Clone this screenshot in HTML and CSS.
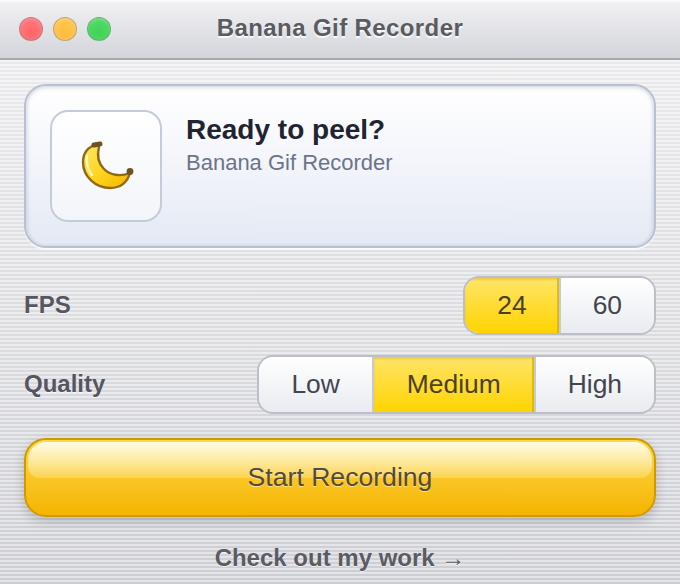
FILE: index.html
```html
<!DOCTYPE html>
<html lang="en">
<head>
<meta charset="utf-8">
<title>Banana Gif Recorder</title>
<link rel="stylesheet" href="styles.css">
</head>
<body>
<div class="window">
  <header class="titlebar">
    <div class="lights">
      <span class="light red"></span>
      <span class="light yellow"></span>
      <span class="light green"></span>
    </div>
    <h1 class="window-title">Banana Gif Recorder</h1>
  </header>
  <main class="content">
    <section class="card">
      <div class="icon-box">
        <svg class="banana" viewBox="78 140 56 52" width="56" height="52" aria-hidden="true">
          <defs>
            <linearGradient id="peel" x1="0" y1="0" x2="1" y2="1">
              <stop offset="0" stop-color="#ffe96a"/>
              <stop offset="0.55" stop-color="#ffd21a"/>
              <stop offset="1" stop-color="#f5b400"/>
            </linearGradient>
          </defs>
          <path d="M97 145C88 146 83 153 83 162C83 177 96 188 110 188C120 188 127 183 130 173C120 177 110 175 104 169C98 163 97 155 99 147Z" fill="url(#peel)" stroke="#8f6a14" stroke-width="2.4" stroke-linejoin="round"/>
          <path d="M87 156C86 163 88 170 92 175" fill="none" stroke="#fff6b8" stroke-width="2.4" stroke-linecap="round"/>
          <path d="M94 145L100 144" fill="none" stroke="#6f5220" stroke-width="5" stroke-linecap="round"/>
          <circle cx="130" cy="171.5" r="3.4" fill="#6f5220"/>
        </svg>
      </div>
      <div class="card-text">
        <h2 class="card-title">Ready to peel?</h2>
        <p class="card-sub">Banana Gif Recorder</p>
      </div>
    </section>

    <div class="row row-fps">
      <span class="label">FPS</span>
      <div class="segment">
        <button class="seg active">24</button>
        <button class="seg">60</button>
      </div>
    </div>

    <div class="row row-quality">
      <span class="label">Quality</span>
      <div class="segment">
        <button class="seg">Low</button>
        <button class="seg active wide">Medium</button>
        <button class="seg">High</button>
      </div>
    </div>

    <button class="record">Start Recording</button>

    <a class="work-link" href="#">Check out my work →</a>
  </main>
</div>
</body>
</html>
```

FILE: styles.css
```css
* { box-sizing: border-box; }

html, body {
  margin: 0;
  height: 100%;
  overflow: hidden;
}

body {
  font-family: "Liberation Sans", Arial, sans-serif;
  color: #55565f;
}

.window {
  height: 584px;
  display: flex;
  flex-direction: column;
  background:
    repeating-linear-gradient(180deg, rgba(255,255,255,.42) 0 2px, rgba(0,0,0,.015) 2px 4px),
    linear-gradient(180deg, #f1f1f3 0%, #d0d1d7 100%);
}

.titlebar {
  height: 60px;
  flex: none;
  display: flex;
  align-items: center;
  justify-content: center;
  position: relative;
  padding-bottom: 4px;
  border-top: 2px solid #fafafb;
  border-bottom: 2px solid #a8aab2;
  background: linear-gradient(180deg, #f1f1f4 0%, #d3d5da 100%);
}

.lights {
  position: absolute;
  left: 19px;
  top: 15px;
  display: flex;
  gap: 10px;
}

.light {
  width: 24px;
  height: 24px;
  border-radius: 50%;
  border: 1px solid rgba(130,130,130,.5);
}
.red { background: radial-gradient(circle at 50% 65%, #ff6468 0%, #ff7478 55%, #ff9a9e 100%); }
.yellow { background: radial-gradient(circle at 50% 65%, #ffbc3e 0%, #ffc44f 55%, #ffd888 100%); }
.green { background: radial-gradient(circle at 50% 65%, #3ed455 0%, #4dd863 55%, #90e898 100%); }

.window-title {
  margin: 0;
  font-size: 24px;
  font-weight: 700;
  letter-spacing: .4px;
  line-height: 28px;
  color: #5a5b63;
  text-shadow: 0 2px 0 rgba(255,255,255,.8);
}

.content {
  flex: 1;
  display: flex;
  flex-direction: column;
  padding: 24px 24px 0;
}

.card {
  height: 164px;
  flex: none;
  display: flex;
  gap: 24px;
  padding: 24px;
  border: 2px solid #b8c1d2;
  border-radius: 22px;
  background: linear-gradient(180deg, #ffffff 0%, #f8f9fd 30%, #e4e9f3 100%);
  box-shadow: inset 0 2px 4px rgba(130,145,175,.25), inset -2px 0 3px rgba(130,145,175,.12), inset 2px 0 3px rgba(130,145,175,.12), 0 2px 0 rgba(255,255,255,.7);
}

.icon-box {
  width: 112px;
  height: 112px;
  flex: none;
  display: flex;
  align-items: center;
  justify-content: center;
  border: 2px solid #c5ccd9;
  border-radius: 18px;
  background: linear-gradient(180deg, #ffffff 0%, #f3f5fa 100%);
}

.banana { display: block; }

.card-text { padding-top: 3px; }

.card-title {
  margin: 0;
  font-size: 28px;
  line-height: 34px;
  font-weight: 700;
  color: #1f2430;
}

.card-sub {
  margin: 3px 0 0;
  font-size: 22px;
  line-height: 26px;
  color: #6b7488;
}

.row {
  display: flex;
  align-items: center;
  justify-content: space-between;
}
.row-fps { margin-top: 28px; }
.row-quality { margin-top: 20px; }

.label {
  font-size: 24px;
  font-weight: 700;
  color: #55565f;
  padding-bottom: 2px;
  text-shadow: 0 1px 0 rgba(255,255,255,.7);
}

.segment {
  display: flex;
  height: 59px;
  border: 2px solid #bcbec8;
  border-radius: 16px;
  overflow: hidden;
}

.seg {
  font: 26.4px/30px "Liberation Sans", Arial, sans-serif;
  color: #43454e;
  padding: 0 32px 2px;
  border: 0;
  border-left: 2px solid #c8cad2;
  background: linear-gradient(180deg, #ffffff 0%, #e9ebf0 100%);
}
.seg:first-child { border-left: 0; }
.seg.active {
  color: #4a4128;
  background: linear-gradient(180deg, #ffe468 0%, #ffd400 100%);
  box-shadow: inset -2px 0 0 rgba(210,175,0,.7), inset 0 2px 2px rgba(190,150,0,.3);
}
.seg.wide { padding: 0 33px 2px; }

.record {
  position: relative;
  isolation: isolate;
  margin-top: 24px;
  height: 79px;
  flex: none;
  width: 100%;
  padding-bottom: 2px;
  border: 2px solid #cf9a00;
  border-radius: 22px;
  background: linear-gradient(180deg, #ffd94f 0%, #f5b400 100%);
  box-shadow: 0 4px 12px rgba(0,0,0,.2);
  font: 26.6px/30px "Liberation Sans", Arial, sans-serif;
  color: #514a3d;
  text-shadow: 0 1px 0 rgba(255,255,255,.5);
}

.record::before {
  content: "";
  position: absolute;
  z-index: -1;
  left: 2px;
  right: 2px;
  top: 2px;
  height: 36px;
  border-radius: 18px 18px 12px 12px;
  background: linear-gradient(180deg, rgba(255,253,238,.94) 0%, rgba(255,244,190,.28) 100%);
}

.work-link {
  margin-top: 27px;
  align-self: center;
  font-size: 24px;
  line-height: 28px;
  font-weight: 700;
  color: #5a5b64;
  text-decoration: none;
  text-shadow: 0 1px 0 rgba(255,255,255,.7);
}
```
